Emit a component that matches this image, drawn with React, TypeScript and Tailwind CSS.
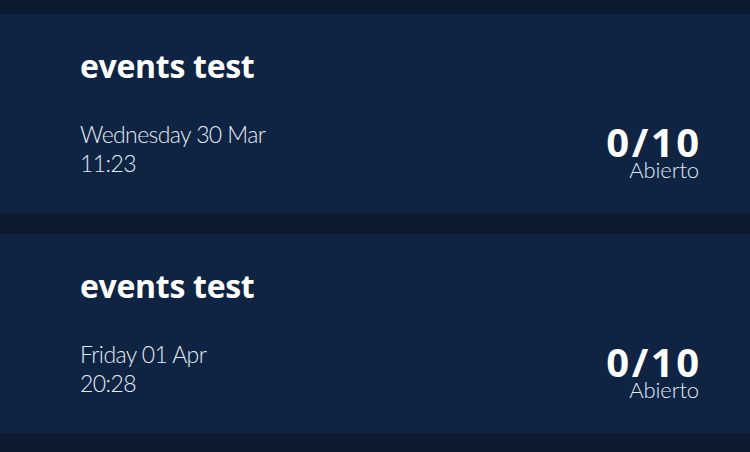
const events = [
  { title: 'events test', date: 'Wednesday 30 Mar', time: '11:23', count: '0/10', status: 'Abierto' },
  { title: 'events test', date: 'Friday 01 Apr', time: '20:28', count: '0/10', status: 'Abierto' },
]

export default function App() {
  return (
    <div
      className="w-[750px] h-[452px] overflow-hidden bg-[#0b1a2f] pt-[14px] flex flex-col gap-[21px]"
      style={{ fontFamily: 'Lato, "Noto Sans", sans-serif' }}
    >
      {events.map((e, i) => (
        <div key={i} className="h-[199px] shrink-0 bg-[#0e2442] pl-[80px] pr-[51px] pt-[34px]">
          <h2 className="font-['Open_Sans',sans-serif] text-[32px] leading-[36px] font-bold tracking-[-0.3px] text-white">
            {e.title}
          </h2>
          <div className="mt-[36px] flex justify-between items-start">
            <div className="text-[23px] leading-[29px] font-light tracking-[-0.6px] text-[#e4eaf2]">
              <div>{e.date}</div>
              <div>{e.time}</div>
            </div>
            <div className="mt-[4px] flex flex-col items-end">
              <span className="font-['Open_Sans',sans-serif] text-[40px] leading-[36px] font-bold tracking-[2.5px] -mr-[2.5px] text-white">
                {e.count}
              </span>
              <span className="text-[22px] leading-[20px] font-light tracking-[-0.1px] text-[#e4eaf2]">
                {e.status}
              </span>
            </div>
          </div>
        </div>
      ))}
    </div>
  )
}
